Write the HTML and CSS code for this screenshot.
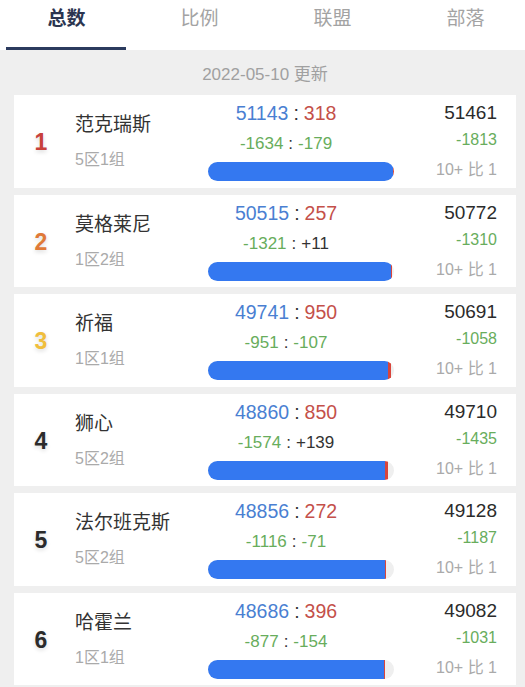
FILE: index.html
```html
<!DOCTYPE html>
<html lang="zh">
<head>
<meta charset="utf-8">
<title>排行</title>
<link rel="stylesheet" href="styles.css">
</head>
<body>
<div class="page">
  <nav class="tabs">
    <div class="tab active">总数</div>
    <div class="tab">比例</div>
    <div class="tab">联盟</div>
    <div class="tab">部落</div>
  </nav>
  <main class="content">
    <div class="date">2022-05-10 更新</div>

    <div class="card">
      <div class="rank r1">1</div>
      <div class="info"><div class="name">范克瑞斯</div><div class="sub">5区1组</div></div>
      <div class="mid">
        <div class="l1"><span class="blue">51143</span><span class="colon">:</span><span class="red">318</span></div>
        <div class="l2"><span class="green">-1634</span><span class="colon">:</span><span class="green">-179</span></div>
        <div class="track"><div class="fill" style="width:184.8px"></div><div class="tip" style="width:1.2px"></div></div>
      </div>
      <div class="right"><div class="total">51461</div><div class="delta">-1813</div><div class="ratio">10+ 比 1</div></div>
    </div>

    <div class="card">
      <div class="rank r2">2</div>
      <div class="info"><div class="name">莫格莱尼</div><div class="sub">1区2组</div></div>
      <div class="mid">
        <div class="l1"><span class="blue">50515</span><span class="colon">:</span><span class="red">257</span></div>
        <div class="l2"><span class="green">-1321</span><span class="colon">:</span><span class="dark">+11</span></div>
        <div class="track"><div class="fill" style="width:182.6px"></div><div class="tip" style="width:1.2px"></div></div>
      </div>
      <div class="right"><div class="total">50772</div><div class="delta">-1310</div><div class="ratio">10+ 比 1</div></div>
    </div>

    <div class="card">
      <div class="rank r3">3</div>
      <div class="info"><div class="name">祈福</div><div class="sub">1区1组</div></div>
      <div class="mid">
        <div class="l1"><span class="blue">49741</span><span class="colon">:</span><span class="red">950</span></div>
        <div class="l2"><span class="green">-951</span><span class="colon">:</span><span class="green">-107</span></div>
        <div class="track"><div class="fill" style="width:179.8px"></div><div class="tip" style="width:3.4px"></div></div>
      </div>
      <div class="right"><div class="total">50691</div><div class="delta">-1058</div><div class="ratio">10+ 比 1</div></div>
    </div>

    <div class="card">
      <div class="rank r4">4</div>
      <div class="info"><div class="name">狮心</div><div class="sub">5区2组</div></div>
      <div class="mid">
        <div class="l1"><span class="blue">48860</span><span class="colon">:</span><span class="red">850</span></div>
        <div class="l2"><span class="green">-1574</span><span class="colon">:</span><span class="dark">+139</span></div>
        <div class="track"><div class="fill" style="width:176.6px"></div><div class="tip" style="width:3px"></div></div>
      </div>
      <div class="right"><div class="total">49710</div><div class="delta">-1435</div><div class="ratio">10+ 比 1</div></div>
    </div>

    <div class="card">
      <div class="rank r4">5</div>
      <div class="info"><div class="name">法尔班克斯</div><div class="sub">5区2组</div></div>
      <div class="mid">
        <div class="l1"><span class="blue">48856</span><span class="colon">:</span><span class="red">272</span></div>
        <div class="l2"><span class="green">-1116</span><span class="colon">:</span><span class="green">-71</span></div>
        <div class="track"><div class="fill" style="width:176.6px"></div><div class="tip" style="width:1px"></div></div>
      </div>
      <div class="right"><div class="total">49128</div><div class="delta">-1187</div><div class="ratio">10+ 比 1</div></div>
    </div>

    <div class="card">
      <div class="rank r4">6</div>
      <div class="info"><div class="name">哈霍兰</div><div class="sub">1区1组</div></div>
      <div class="mid">
        <div class="l1"><span class="blue">48686</span><span class="colon">:</span><span class="red">396</span></div>
        <div class="l2"><span class="green">-877</span><span class="colon">:</span><span class="green">-154</span></div>
        <div class="track"><div class="fill" style="width:176px"></div><div class="tip" style="width:1.4px"></div></div>
      </div>
      <div class="right"><div class="total">49082</div><div class="delta">-1031</div><div class="ratio">10+ 比 1</div></div>
    </div>
  </main>
</div>
</body>
</html>
```

FILE: styles.css
```css
html, body {
  margin: 0;
  padding: 0;
}
body {
  width: 525px;
  height: 687px;
  overflow: hidden;
  background: #efefef;
  font-family: "Liberation Sans", "Noto Sans CJK SC", sans-serif;
  color: #333;
}
.page {
  width: 525px;
}
.tabs {
  display: grid;
  grid-template-columns: repeat(4, 133px);
  height: 50px;
  background: #fff;
  overflow: hidden;
}
.tab {
  position: relative;
  text-align: center;
  font-size: 19px;
  line-height: 38px;
  color: #a3a3a3;
}
.tab.active {
  color: #2b3550;
  font-weight: bold;
}
.tab.active::after {
  content: "";
  position: absolute;
  left: 6px;
  width: 120px;
  top: 47px;
  height: 3px;
  background: #2b3b5e;
}
.content {
  display: flex;
  flex-direction: column;
  gap: 7px;
  padding: 0 9px 0 14px;
}
.date {
  text-align: center;
  font-size: 17px;
  line-height: 26px;
  color: #a0a0a0;
  padding-top: 12px;
}
.card {
  display: flex;
  height: 92.5px;
  background: #fff;
  box-sizing: border-box;
}
.rank {
  width: 54px;
  text-align: center;
  font-size: 23px;
  font-weight: bold;
  line-height: 26px;
  padding-top: 34px;
  text-shadow: 0 2px 4px rgba(0, 0, 0, 0.14);
}
.r1 { color: #c8413b; }
.r2 { color: #e07a38; }
.r3 { color: #f0be3c; }
.r4 { color: #2b2b2b; }
.info {
  width: 133px;
  padding-left: 7px;
  padding-top: 17px;
}
.name {
  font-size: 19px;
  line-height: 26px;
  color: #333;
}
.sub {
  font-size: 16px;
  line-height: 26px;
  color: #aaa;
  margin-top: 9px;
}
.mid {
  width: 186px;
  padding-top: 5px;
}
.l1, .l2 {
  width: 156px;
  text-align: center;
  line-height: 26px;
  white-space: nowrap;
}
.l1 {
  font-size: 19.5px;
}
.l2 {
  font-size: 17px;
  margin-top: 5px;
}
.colon {
  color: #333;
  margin: 0 5px;
}
.blue { color: #4a7fd2; }
.red { color: #c4504a; }
.green { color: #68ad5c; }
.dark { color: #333; }
.track {
  display: flex;
  margin-top: 5px;
  height: 19px;
  border-radius: 10px;
  background: #efefef;
  overflow: hidden;
}
.fill {
  height: 100%;
  background: #3478f0;
}
.tip {
  height: 100%;
  background: #d9453c;
}
.right {
  flex: 1;
  text-align: right;
  padding-right: 19px;
  padding-top: 5px;
}
.total {
  font-size: 19px;
  line-height: 26px;
  color: #2b2b2b;
}
.delta {
  font-size: 16px;
  line-height: 26px;
  color: #68ad5c;
  margin-top: 1px;
}
.ratio {
  font-size: 16px;
  line-height: 26px;
  color: #aaa;
  margin-top: 4px;
}
```
